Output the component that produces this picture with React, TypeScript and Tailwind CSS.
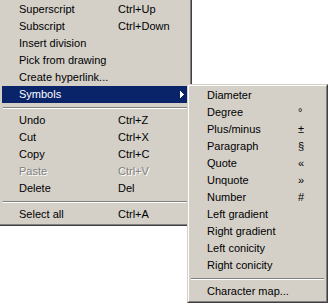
import React from "react";

type Item = { label: string; key?: string; disabled?: boolean; active?: boolean; arrow?: boolean } | "sep";

const mainItems: Item[] = [
  { label: "Superscript", key: "Ctrl+Up" },
  { label: "Subscript", key: "Ctrl+Down" },
  { label: "Insert division" },
  { label: "Pick from drawing" },
  { label: "Create hyperlink..." },
  { label: "Symbols", active: true, arrow: true },
  "sep",
  { label: "Undo", key: "Ctrl+Z" },
  { label: "Cut", key: "Ctrl+X" },
  { label: "Copy", key: "Ctrl+C" },
  { label: "Paste", key: "Ctrl+V", disabled: true },
  { label: "Delete", key: "Del" },
  "sep",
  { label: "Select all", key: "Ctrl+A" },
];

const subItems: Item[] = [
  { label: "Diameter" },
  { label: "Degree", key: "°" },
  { label: "Plus/minus", key: "±" },
  { label: "Paragraph", key: "§" },
  { label: "Quote", key: "«" },
  { label: "Unquote", key: "»" },
  { label: "Number", key: "#" },
  { label: "Left gradient" },
  { label: "Right gradient" },
  { label: "Left conicity" },
  { label: "Right conicity" },
  "sep",
  { label: "Character map..." },
];

function Sep() {
  return (
    <div className="h-[9px] flex flex-col justify-center px-px">
      <div className="h-px bg-[#808080]" />
      <div className="h-px bg-white" />
    </div>
  );
}

function Row({ item, keyCol }: { item: Exclude<Item, "sep">; keyCol: string }) {
  const text = item.active
    ? "text-white"
    : item.disabled
    ? "text-[#808080] [text-shadow:1px_1px_0_#ffffff]"
    : "text-black";
  return (
    <div className={`relative flex items-center h-[17px] ${item.active ? "bg-[#0a246a]" : ""} ${text}`}>
      <span className={`pl-[17px] ${keyCol} shrink-0 whitespace-nowrap`}>{item.label}</span>
      {item.key && <span className="whitespace-nowrap">{item.key}</span>}
      {item.arrow && (
        <svg className="absolute right-[5px] top-[5px]" width="4" height="7" viewBox="0 0 4 7">
          <path d="M0 0h1v7H0zM1 1h1v5H1zM2 2h1v3H2zM3 3h1v1H3z" fill="#ffffff" />
        </svg>
      )}
    </div>
  );
}

export default function App() {
  return (
    <div className="relative w-[328px] h-[304px] bg-white overflow-hidden font-['Liberation_Sans',Arial,sans-serif] text-[11px] leading-none">
      {/* main context menu, top edge cut off */}
      <div className="w-[192px] bg-[#d4d0c8] border-r border-b border-[#404040]">
        <div className="border-r border-b border-[#808080] pt-px pl-[2px] pr-px pb-px">
          {mainItems.map((it, i) =>
            it === "sep" ? <Sep key={i} /> : <Row key={i} item={it} keyCol="w-[116px]" />
          )}
        </div>
      </div>

      {/* Symbols flyout */}
      <div className="absolute left-[187px] top-[84px] w-[141px] bg-[#d4d0c8] border border-t-[#d4d0c8] border-l-[#d4d0c8] border-r-[#404040] border-b-[#404040]">
        <div className="border border-t-white border-l-white border-r-[#808080] border-b-[#808080] p-px">
          {subItems.map((it, i) =>
            it === "sep" ? <Sep key={i} /> : <Row key={i} item={it} keyCol="w-[108px]" />
          )}
        </div>
      </div>
    </div>
  );
}
